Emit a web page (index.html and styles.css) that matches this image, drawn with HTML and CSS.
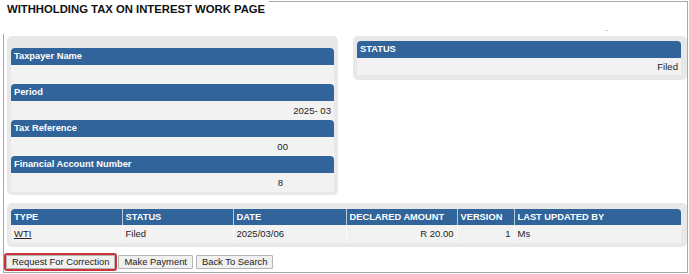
FILE: index.html
```html
<!DOCTYPE html>
<html>
<head>
<meta charset="utf-8">
<link rel="stylesheet" href="styles.css">
</head>
<body>
<div class="frame">
  <div class="top">
    <div class="title">WITHHOLDING TAX ON INTEREST WORK PAGE</div>
    <div class="dash">-</div>
  </div>
  <div class="panels">
    <div class="panel panel-left">
      <div class="head">Taxpayer Name</div>
      <div class="val"></div>
      <div class="head">Period</div>
      <div class="val">2025- 03</div>
      <div class="head">Tax Reference</div>
      <div class="val val-ref">00</div>
      <div class="head">Financial Account Number</div>
      <div class="val val-acc">8</div>
    </div>
    <div class="panel panel-right">
      <div class="head">STATUS</div>
      <div class="val val-status">Filed</div>
    </div>
  </div>
  <div class="panel panel-table">
    <table class="grid">
      <colgroup>
        <col class="c-type"><col class="c-status"><col class="c-date"><col class="c-amount"><col class="c-version"><col class="c-user">
      </colgroup>
      <thead>
        <tr><th>TYPE</th><th>STATUS</th><th>DATE</th><th>DECLARED AMOUNT</th><th>VERSION</th><th>LAST UPDATED BY</th></tr>
      </thead>
      <tbody>
        <tr><td><a class="link">WTI</a></td><td>Filed</td><td>2025/03/06</td><td class="num">R 20.00</td><td class="num">1</td><td>Ms</td></tr>
      </tbody>
    </table>
  </div>
  <div class="actions">
    <button class="btn btn-hl">Request For Correction</button>
    <button class="btn">Make Payment</button>
    <button class="btn">Back To Search</button>
  </div>
</div>
</body>
</html>
```

FILE: styles.css
```css
html, body {
  margin: 0;
  padding: 0;
  background: #fff;
}
body {
  font-family: "Liberation Sans", Arial, sans-serif;
  color: #222;
}
.frame {
  margin: 1px 1px 0 3px;
  height: 272px;
  box-sizing: border-box;
  border: 1px solid #a9a9a9;
  padding: 0 0 1px 3px;
}
.top {
  display: flex;
  height: 34px;
}
.title {
  margin: -1px 0 0 -4px;
  padding: 2px 0 0 4px;
  width: 262px;
  height: 31px;
  background: #fff;
  font-size: 11.3px;
  line-height: 13px;
  font-weight: bold;
  color: #111;
  white-space: nowrap;
}
.dash {
  margin-left: auto;
  margin-right: 79px;
  padding-top: 24px;
  font-size: 8px;
  line-height: 8px;
  color: #888;
}
.panels {
  display: flex;
  gap: 15px;
  align-items: flex-start;
}
.panel {
  background: #e8e8e8;
  border-radius: 5px;
}
.panel-left {
  width: 331px;
  box-sizing: border-box;
  padding: 12px 4px 3px 4px;
}
.panel-right {
  flex: 1;
  padding: 5px 6px 5px 4px;
}
.head {
  background: #30649a;
  color: #fff;
  font-weight: bold;
  font-size: 9.3px;
  height: 17px;
  line-height: 17px;
  padding-left: 3px;
  border-radius: 4px 4px 0 0;
  white-space: nowrap;
}
.val {
  background: #f2f2f2;
  height: 19px;
  line-height: 19px;
  font-size: 9.6px;
  text-align: right;
  padding-right: 3px;
}
.val-ref { padding-right: 46px; }
.val-acc { padding-right: 51px; }
.val-status { height: 17px; line-height: 17px; padding-right: 3px; }
.panel-table {
  margin-top: 8px;
  padding: 6px 5px 4px 4px;
}
.grid {
  width: 670px;
  border-collapse: collapse;
  table-layout: fixed;
  font-size: 9.5px;
}
.c-type { width: 111px; }
.c-status { width: 111px; }
.c-date { width: 113px; }
.c-amount { width: 111px; }
.c-version { width: 57px; }
.c-user { width: 167px; }
.grid th {
  background: #30649a;
  color: #fff;
  font-weight: bold;
  font-size: 9.3px;
  text-align: left;
  height: 16px;
  line-height: 16px;
  padding: 0 3px;
  border-left: 1px solid #b9cadb;
  white-space: nowrap;
}
.grid th:first-child { border-left: none; border-top-left-radius: 4px; }
.grid th:last-child { border-top-right-radius: 4px; }
.grid td {
  background: #f2f2f2;
  height: 18px;
  line-height: 18px;
  padding: 0 3px;
  border-left: 1px solid #fbfbfb;
  white-space: nowrap;
}
.grid td:first-child { border-left: none; }
.grid td.num { text-align: right; }
.link {
  color: #222;
  text-decoration: underline;
}
.actions {
  display: flex;
  gap: 3px;
  margin-top: 8px;
  margin-left: -1px;
}
.btn {
  font-family: "Liberation Sans", Arial, sans-serif;
  font-size: 9.4px;
  color: #222;
  height: 14px;
  line-height: 12px;
  padding: 0 5px;
  margin: 0;
  background: #f0f0f0;
  border: 1px solid #b4b4b4;
  border-radius: 1px;
  white-space: nowrap;
}
.btn-hl {
  outline: 2px solid #c9343a;
  outline-offset: 0;
}
```
